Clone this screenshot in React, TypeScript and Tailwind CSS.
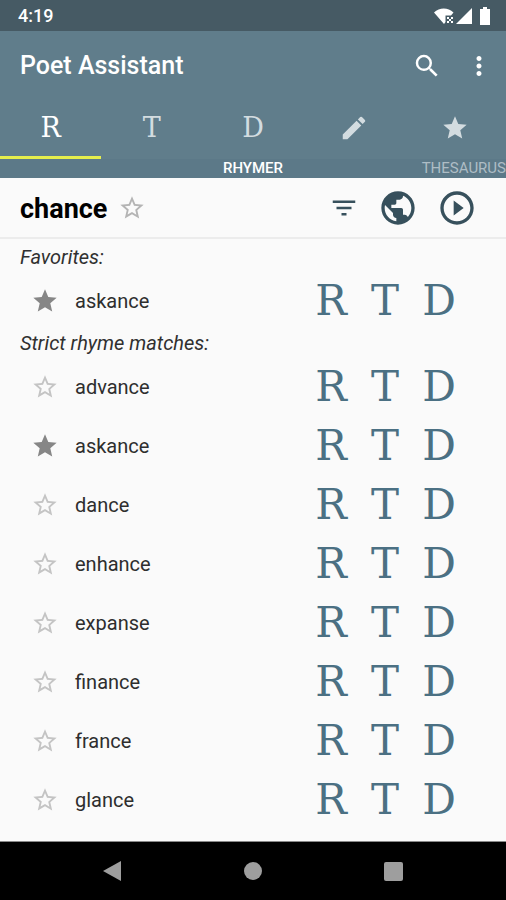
import type { ReactNode } from "react";
import {
  MdEdit,
  MdFilterList,
  MdMoreVert,
  MdPlayCircleOutline,
  MdPublic,
  MdSearch,
  MdStar,
  MdStarBorder,
} from "react-icons/md";

const rhymes = [
  { word: "advance", favorite: false },
  { word: "askance", favorite: true },
  { word: "dance", favorite: false },
  { word: "enhance", favorite: false },
  { word: "expanse", favorite: false },
  { word: "finance", favorite: false },
  { word: "france", favorite: false },
  { word: "glance", favorite: false },
];

const lookups = [
  { letter: "R", name: "Rhymer" },
  { letter: "T", name: "Thesaurus" },
  { letter: "D", name: "Dictionary" },
];

function StatusBar() {
  return (
    <div className="flex h-[31px] items-center justify-between bg-[#465a64] pl-[18px] pr-4 text-white">
      <span className="text-lg font-medium leading-none">4:19</span>
      <div className="flex items-center">
        <svg className="h-4 w-5" viewBox="0 0 20 16" fill="currentColor" aria-label="Wi-Fi">
          <path d="M0 4.500C5.500-1 14-1 19.500 4.500L17 7.500H11.500V14L10 16Z" />
          <path d="M13 9h2v2h-2zM17 9h2v2h-2zM15 11h2v2h-2zM13 13h2v2h-2zM17 13h2v2h-2z" />
        </svg>
        <svg className="ml-0.5 h-4 w-4" viewBox="0 0 16 16" fill="currentColor" aria-label="Signal">
          <path d="M16 0v16H0Z" />
        </svg>
        <svg className="ml-2 h-[18px] w-[10px]" viewBox="0 0 10 18" fill="currentColor" aria-label="Battery">
          <path d="M3 0h4v2h3v16H0V2h3Z" />
        </svg>
      </div>
    </div>
  );
}

function Tab({ label, active, children }: { label: string; active?: boolean; children: ReactNode }) {
  return (
    <button
      type="button"
      role="tab"
      aria-label={label}
      aria-selected={!!active}
      className={`flex items-center justify-center border-b-[3px] ${
        active ? "border-[#e6ee4c] text-white" : "border-transparent text-[#d3dce0]"
      }`}
    >
      {children}
    </button>
  );
}

function WordRow({ word, favorite }: { word: string; favorite: boolean }) {
  return (
    <li className="flex h-[59px] items-center pl-[31px] pr-10">
      <button type="button" aria-label={`Favorite ${word}`} className="text-[28px]">
        {favorite ? <MdStar className="text-[#868686]" /> : <MdStarBorder className="text-[#c4c4c4]" />}
      </button>
      <span className="flex-1 pl-4 text-xl leading-6 text-[#2e2e2e]">{word}</span>
      {lookups.map(({ letter, name }) => (
        <button
          key={letter}
          type="button"
          aria-label={`${name}: ${word}`}
          className="w-[54px] text-center font-['DejaVu_Serif',serif] text-[42px] leading-none text-[#4b7083]"
        >
          {letter}
        </button>
      ))}
    </li>
  );
}

function SectionTitle({ children }: { children: ReactNode }) {
  return <h2 className="pl-5 text-xl italic leading-[27px] text-[#303030]">{children}</h2>;
}

export default function App() {
  return (
    <div className="flex min-h-screen flex-col bg-[#fafafa] font-[Roboto,sans-serif]">
      <StatusBar />
      <header className="bg-[#607d8b] text-white">
        <div className="flex h-[69px] items-center pl-5 pr-3">
          <h1 className="flex-1 text-[25px] font-medium">Poet Assistant</h1>
          <button type="button" aria-label="Search" className="mr-[22px] text-[30px]">
            <MdSearch />
          </button>
          <button type="button" aria-label="More options" className="text-[30px]">
            <MdMoreVert />
          </button>
        </div>
        <div role="tablist" className="grid h-[59px] grid-cols-5">
          <Tab label="Rhymer" active>
            <span className="font-['DejaVu_Serif',serif] text-[27px] leading-8">R</span>
          </Tab>
          <Tab label="Thesaurus">
            <span className="font-['DejaVu_Serif',serif] text-[27px] leading-8">T</span>
          </Tab>
          <Tab label="Dictionary">
            <span className="font-['DejaVu_Serif',serif] text-[27px] leading-8">D</span>
          </Tab>
          <Tab label="Reader">
            <MdEdit className="text-[30px]" />
          </Tab>
          <Tab label="Favorites">
            <MdStar className="text-[28px]" />
          </Tab>
        </div>
        <div className="grid h-[19px] grid-cols-3 items-center bg-[#5c7988] text-[15px] leading-none">
          <span className="col-start-2 text-center font-medium">RHYMER</span>
          <span className="text-right text-[#aebdc5]">THESAURUS</span>
        </div>
      </header>

      <main className="flex-1">
        <div className="flex h-[61px] items-center border-b-2 border-[#ececec] pl-5 pr-[29px] text-[#37505c]">
          <span className="pt-1 text-[27px] font-bold text-black">chance</span>
          <button type="button" aria-label="Favorite chance" className="ml-[11px] text-[28px] text-[#b4b4b4]">
            <MdStarBorder />
          </button>
          <button type="button" aria-label="Filter" className="ml-auto text-[30px]">
            <MdFilterList />
          </button>
          <button type="button" aria-label="Web search" className="ml-[19px] text-[40px]">
            <MdPublic />
          </button>
          <button type="button" aria-label="Play" className="ml-[19px] text-[40px]">
            <MdPlayCircleOutline />
          </button>
        </div>
        <div className="pb-3 pt-[5px]">
          <SectionTitle>Favorites:</SectionTitle>
          <ul>
            <WordRow word="askance" favorite />
          </ul>
          <SectionTitle>Strict rhyme matches:</SectionTitle>
          <ul>
            {rhymes.map((r) => (
              <WordRow key={r.word} word={r.word} favorite={r.favorite} />
            ))}
          </ul>
        </div>
      </main>

      <nav className="grid h-[59px] grid-cols-3 items-center justify-items-center border-t border-[#8a8a8a] bg-black px-[42px] text-[#9e9e9e]">
        <button type="button" aria-label="Back">
          <svg className="h-5 w-[18px]" viewBox="0 0 18 20" fill="currentColor">
            <path d="M18 0v20L0 10Z" />
          </svg>
        </button>
        <button type="button" aria-label="Home" className="size-[18px] rounded-full bg-[#9e9e9e]" />
        <button type="button" aria-label="Recent apps" className="size-[19px] rounded-xs bg-[#9e9e9e]" />
      </nav>
    </div>
  );
}
